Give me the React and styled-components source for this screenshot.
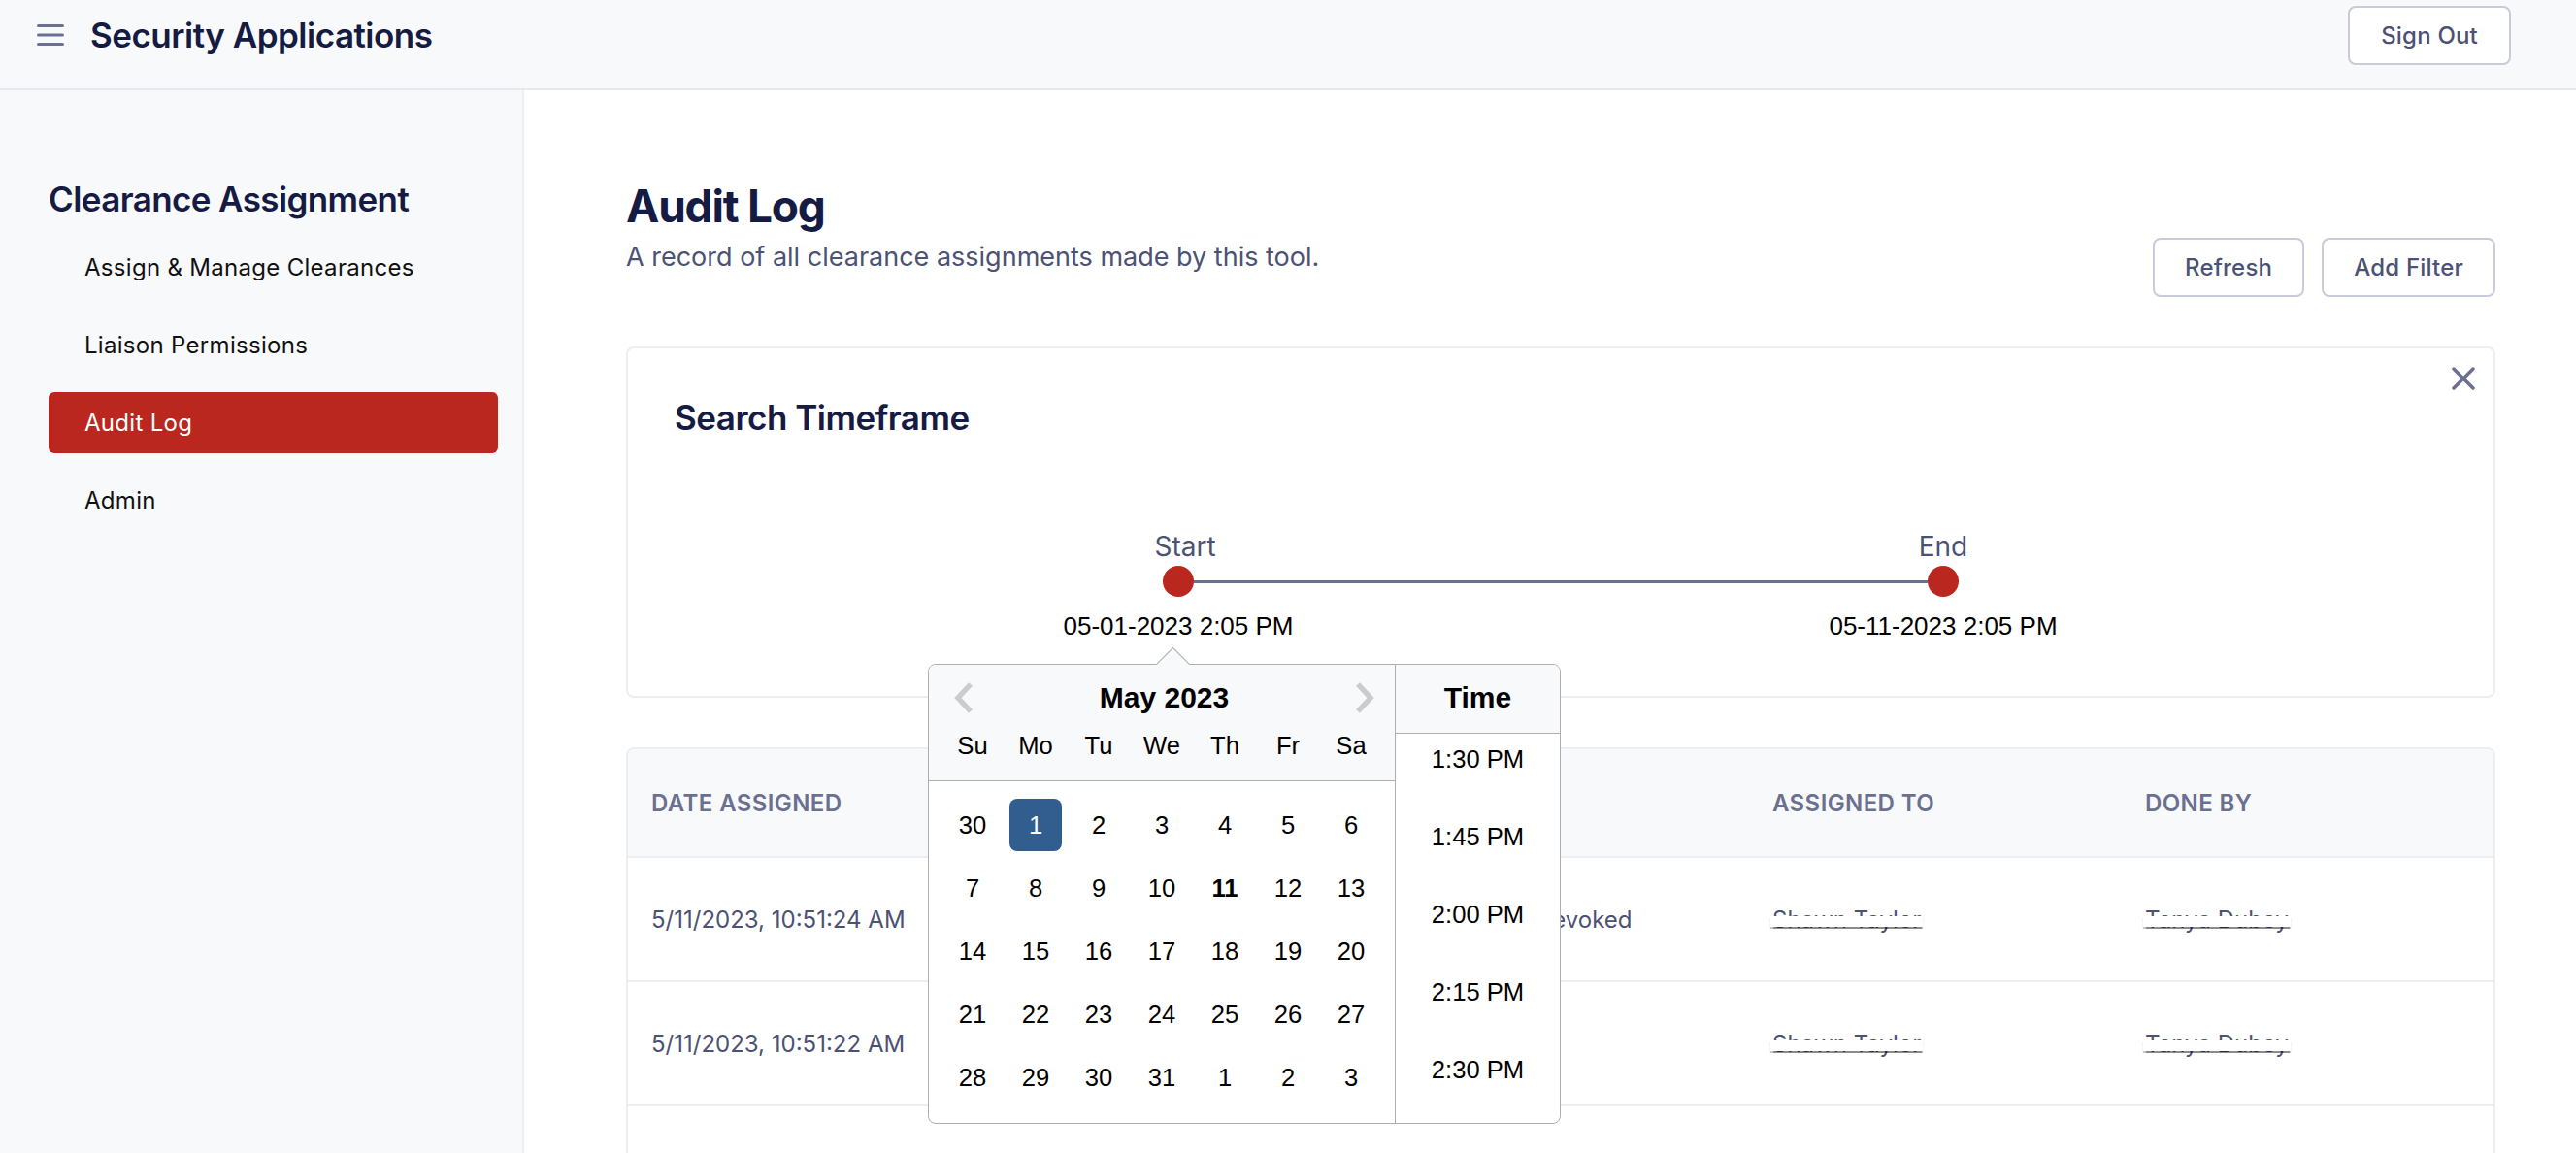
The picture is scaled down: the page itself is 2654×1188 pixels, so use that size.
import React, { useEffect, useRef } from 'react'
import styled, { createGlobalStyle } from 'styled-components'

const navy = '#151b42'
const slate = '#4c5274'
const muted = '#6b7091'
const line = '#eceef3'

const GlobalStyle = createGlobalStyle`
  html, body { margin: 0; padding: 0; overflow: hidden; }
  body { font-family: Inter, "Noto Sans", sans-serif; background: #fff; }
  * { box-sizing: border-box; }
`

const Page = styled.div`
  display: flex;
  flex-direction: column;
  height: 100vh;
`

const TopBar = styled.header`
  flex-shrink: 0;
  display: flex;
  align-items: center;
  justify-content: space-between;
  height: 93px;
  padding: 5px 67px 24px 38px;
  background: #f8f9fb;
  border-bottom: 2px solid #e6e8ee;
`

const Brand = styled.div`
  display: flex;
  align-items: center;
  gap: 27px;
`

const BrandTitle = styled.h1`
  margin: 0;
  font-size: 35px;
  line-height: 44px;
  font-weight: 600;
  color: ${navy};
  letter-spacing: -0.5px;
`

const OutlineButton = styled.button`
  height: 61px;
  padding: 0 ${p => p.$pad || 31}px;
  background: #fff;
  border: 2px solid #c9cbda;
  border-radius: 8px;
  font-family: inherit;
  font-size: 24px;
  font-weight: 500;
  letter-spacing: 0.2px;
  color: ${slate};
  cursor: pointer;
`

const Body = styled.div`
  flex: 1;
  display: flex;
  min-height: 0;
`

const Sidebar = styled.nav`
  width: 540px;
  flex-shrink: 0;
  padding: 90px 25px 0 50px;
  background: #f8f9fb;
  border-right: 2px solid #eceef2;
`

const SideHeading = styled.h2`
  margin: 0 0 17px;
  font-size: 35px;
  line-height: 44px;
  font-weight: 600;
  color: ${navy};
  letter-spacing: -0.6px;
`

const NavItem = styled.a`
  display: flex;
  align-items: center;
  height: 63px;
  margin-bottom: 17px;
  padding-left: 37px;
  border-radius: 6px;
  font-size: 24px;
  font-weight: 400;
  letter-spacing: 0.3px;
  color: ${p => (p.$active ? '#fff' : '#111')};
  background: ${p => (p.$active ? '#ba271e' : 'transparent')};
  cursor: pointer;
`

const Main = styled.main`
  flex: 1;
  min-width: 0;
  padding: 91px 83px 0 105px;
  background: #fff;
`

const TitleRow = styled.div`
  display: flex;
  justify-content: space-between;
  align-items: flex-start;
`

const PageTitle = styled.h1`
  margin: 0;
  font-size: 46px;
  line-height: 56px;
  font-weight: 700;
  color: ${navy};
  letter-spacing: -1.2px;
`

const Subtitle = styled.p`
  margin: 7px 0 0;
  font-size: 27px;
  line-height: 36px;
  color: ${slate};
`

const ButtonGroup = styled.div`
  display: flex;
  gap: 18px;
  margin-top: 61px;
`

const Card = styled.section`
  margin-top: 51px;
  border: 2px solid ${line};
  border-radius: 8px;
  background: #fff;
`

const SearchCard = styled(Card)`
  padding: 19px 0 57px;
`

const CardTop = styled.div`
  display: flex;
  justify-content: space-between;
  align-items: flex-start;
  padding: 0 19px 0 48px;
`

const CardTitle = styled.h2`
  margin: 30px 0 0;
  font-size: 35px;
  line-height: 44px;
  font-weight: 600;
  color: ${navy};
  letter-spacing: -0.5px;
`

const CloseButton = styled.button`
  display: flex;
  padding: 0;
  border: 0;
  background: none;
  cursor: pointer;
`

const Range = styled.div`
  display: grid;
  grid-template-columns: 300px 1fr 300px;
  width: 1088px;
  margin: 94px auto 0;
`

const EndLabel = styled.div`
  text-align: center;
  font-size: 28px;
  line-height: 34px;
  color: ${slate};
  padding-left: ${p => p.$shift || 0}px;
`

const TrackRow = styled.div`
  grid-column: 1 / 4;
  display: flex;
  align-items: center;
  height: 32px;
  margin-top: 3px;
  padding: 0 134px;
`

const Knob = styled.span`
  width: 32px;
  height: 32px;
  border-radius: 50%;
  background: #ba271e;
  flex-shrink: 0;
`

const Track = styled.span`
  flex: 1;
  height: 3px;
  background: ${muted};
`

const DateField = styled.div`
  position: relative;
  margin-top: 15px;
  text-align: center;
  font-family: "Liberation Sans", Arial, sans-serif;
  font-size: 26px;
  line-height: 30px;
  color: #000;
`

/* datepicker popup */
const Popup = styled.div`
  position: absolute;
  top: calc(100% + 24px);
  left: 50%;
  margin-left: -258px;
  z-index: 10;
  display: flex;
  width: 652px;
  height: 474px;
  background: #fff;
  border: 1px solid #aeaeae;
  border-radius: 8px;
  text-align: left;
  &::before {
    content: '';
    position: absolute;
    top: -13px;
    left: 239px;
    width: 24px;
    height: 24px;
    background: #f8f9fa;
    border-top: 1px solid #aeaeae;
    border-left: 1px solid #aeaeae;
    transform: rotate(45deg);
  }
`

const Calendar = styled.div`
  width: 480px;
  position: relative;
`

const CalHeader = styled.div`
  padding: 16px 0 3px;
  background: #f8f9fa;
  border-bottom: 1px solid #aeaeae;
  border-top-left-radius: 7px;
`

const MonthRow = styled.div`
  display: flex;
  align-items: center;
  justify-content: space-between;
  height: 35px;
  padding: 0 20px 0 25px;
`

const HeadText = styled.div`
  font-size: 30px;
  line-height: 35px;
  font-weight: 700;
  text-align: center;
`

const Grid7 = styled.div`
  display: grid;
  grid-template-columns: repeat(7, 65px);
  padding: ${p => p.$pad || '0 12.5px'};
`

const DayName = styled.div`
  height: 65px;
  line-height: 65px;
  text-align: center;
  font-size: 25.6px;
`

const DayCell = styled.div`
  height: 65px;
  display: flex;
  align-items: center;
  justify-content: center;
`

const Day = styled.span`
  width: 54px;
  height: 54px;
  display: flex;
  align-items: center;
  justify-content: center;
  border-radius: 8px;
  font-size: 25.6px;
  font-weight: ${p => (p.$today ? 700 : 400)};
  color: ${p => (p.$selected ? '#fff' : '#000')};
  background: ${p => (p.$selected ? '#315e8f' : 'transparent')};
`

const TimeBox = styled.div`
  width: 170px;
  display: flex;
  flex-direction: column;
  border-left: 1px solid #aeaeae;
`

const TimeHead = styled.div`
  padding: 16px 0 19px;
  background: #f8f9fa;
  border-bottom: 1px solid #aeaeae;
  border-top-right-radius: 7px;
`

const TimeList = styled.ul`
  flex: 1;
  min-height: 0;
  margin: 0;
  padding: 0;
  list-style: none;
  overflow-y: scroll;
  scrollbar-width: none;
  &::-webkit-scrollbar { display: none; }
`

const TimeItem = styled.li`
  height: 80px;
  line-height: 80px;
  text-align: center;
  font-size: 25.6px;
`

/* table */
const TableCard = styled(Card)`
  overflow: hidden;
`

const TableRow = styled.div`
  display: grid;
  grid-template-columns: 355px 436px 364px 384px 1fr;
  align-items: center;
  height: ${p => (p.$head ? 112 : 128)}px;
  background: ${p => (p.$head ? '#f8f9fb' : '#fff')};
  border-bottom: 2px solid ${line};
`

const HeadCell = styled.div`
  padding-left: 24px;
  font-size: 24px;
  font-weight: 600;
  letter-spacing: 0.4px;
  text-transform: uppercase;
  color: ${muted};
`

const Cell = styled.div`
  padding-left: 24px;
  font-size: 24px;
  color: ${slate};
  white-space: nowrap;
`

const Redacted = styled.span`
  position: relative;
  display: inline-block;
  &::after {
    content: '';
    position: absolute;
    left: -2px;
    right: -2px;
    top: 40%;
    height: 36%;
    background: #fff;
    box-shadow: 0 1.5px 1px rgba(0, 0, 0, 0.45);
  }
`

const Menu = () => (
  <svg width="28" height="22" viewBox="0 0 28 22">
    <g stroke={muted} strokeWidth="3" strokeLinecap="round">
      <line x1="1.5" y1="1.5" x2="26.5" y2="1.5" />
      <line x1="1.5" y1="11" x2="26.5" y2="11" />
      <line x1="1.5" y1="20.5" x2="26.5" y2="20.5" />
    </g>
  </svg>
)

const CloseIcon = () => (
  <svg width="24" height="24" viewBox="0 0 24 24">
    <g stroke={muted} strokeWidth="3.5" strokeLinecap="round">
      <line x1="2" y1="2" x2="22" y2="22" />
      <line x1="22" y1="2" x2="2" y2="22" />
    </g>
  </svg>
)

const Chevron = ({ dir }) => (
  <svg width="22" height="34" viewBox="0 0 22 34">
    <path
      d={dir === 'left' ? 'M18 3 L5 17 L18 31' : 'M4 3 L17 17 L4 31'}
      fill="none"
      stroke="#ccc"
      strokeWidth="5.5"
    />
  </svg>
)

const dayNames = ['Su', 'Mo', 'Tu', 'We', 'Th', 'Fr', 'Sa']
const days = [30, ...Array.from({ length: 31 }, (_, i) => i + 1), 1, 2, 3]

const times = Array.from({ length: 96 }, (_, i) => {
  const h = Math.floor(i / 4)
  const m = (i % 4) * 15
  const hh = h % 12 === 0 ? 12 : h % 12
  return `${hh}:${m === 0 ? '00' : m} ${h < 12 ? 'AM' : 'PM'}`
})

const rows = [
  { date: '5/11/2023, 10:51:24 AM', clearance: 'Building 4 Access', action: 'Clearance Revoked', to: 'Shawn Taylor', by: 'Tanya Dubey' },
  { date: '5/11/2023, 10:51:22 AM', clearance: 'Building 4 Access', action: 'Assigned', to: 'Shawn Taylor', by: 'Tanya Dubey' },
  { date: '5/10/2023, 4:12:09 PM', clearance: 'Lab 2 Access', action: 'Assigned', to: 'Shawn Taylor', by: 'Tanya Dubey' },
]

const DatePicker = () => {
  const listRef = useRef(null)

  useEffect(() => {
    // keep the list scrolled near the selected time, as the widget does
    if (listRef.current) listRef.current.scrollTop = 54 * 80 + 14
  }, [])

  return (
    <Popup>
      <Calendar>
        <CalHeader>
          <MonthRow>
            <Chevron dir="left" />
            <HeadText>May 2023</HeadText>
            <Chevron dir="right" />
          </MonthRow>
          <Grid7>
            {dayNames.map(d => (
              <DayName key={d}>{d}</DayName>
            ))}
          </Grid7>
        </CalHeader>
        <Grid7 $pad="12px 12.5px">
          {days.map((d, i) => (
            <DayCell key={i}>
              <Day $selected={i === 1} $today={i === 11}>{d}</Day>
            </DayCell>
          ))}
        </Grid7>
      </Calendar>
      <TimeBox>
        <TimeHead>
          <HeadText>Time</HeadText>
        </TimeHead>
        <TimeList ref={listRef}>
          {times.map(t => (
            <TimeItem key={t}>{t}</TimeItem>
          ))}
        </TimeList>
      </TimeBox>
    </Popup>
  )
}

const App = () => {
  const nav = ['Assign & Manage Clearances', 'Liaison Permissions', 'Audit Log', 'Admin']

  return (
    <Page>
      <GlobalStyle />
      <TopBar>
        <Brand>
          <Menu />
          <BrandTitle>Security Applications</BrandTitle>
        </Brand>
        <OutlineButton $pad={32}>Sign Out</OutlineButton>
      </TopBar>
      <Body>
        <Sidebar>
          <SideHeading>Clearance Assignment</SideHeading>
          {nav.map(item => (
            <NavItem key={item} $active={item === 'Audit Log'}>{item}</NavItem>
          ))}
        </Sidebar>
        <Main>
          <TitleRow>
            <div>
              <PageTitle>Audit Log</PageTitle>
              <Subtitle>A record of all clearance assignments made by this tool.</Subtitle>
            </div>
            <ButtonGroup>
              <OutlineButton>Refresh</OutlineButton>
              <OutlineButton>Add Filter</OutlineButton>
            </ButtonGroup>
          </TitleRow>

          <SearchCard>
            <CardTop>
              <CardTitle>Search Timeframe</CardTitle>
              <CloseButton><CloseIcon /></CloseButton>
            </CardTop>
            <Range>
              <EndLabel $shift={14}>Start</EndLabel>
              <div />
              <EndLabel>End</EndLabel>
              <TrackRow>
                <Knob />
                <Track />
                <Knob />
              </TrackRow>
              <DateField>
                05-01-2023 2:05 PM
                <DatePicker />
              </DateField>
              <div />
              <DateField>05-11-2023 2:05 PM</DateField>
            </Range>
          </SearchCard>

          <TableCard>
            <TableRow $head>
              <HeadCell>Date Assigned</HeadCell>
              <HeadCell>Clearance</HeadCell>
              <HeadCell>Action</HeadCell>
              <HeadCell>Assigned To</HeadCell>
              <HeadCell>Done By</HeadCell>
            </TableRow>
            {rows.map(r => (
              <TableRow key={r.date}>
                <Cell>{r.date}</Cell>
                <Cell>{r.clearance}</Cell>
                <Cell>{r.action}</Cell>
                <Cell><Redacted>{r.to}</Redacted></Cell>
                <Cell><Redacted>{r.by}</Redacted></Cell>
              </TableRow>
            ))}
          </TableCard>
        </Main>
      </Body>
    </Page>
  )
}

export default App
